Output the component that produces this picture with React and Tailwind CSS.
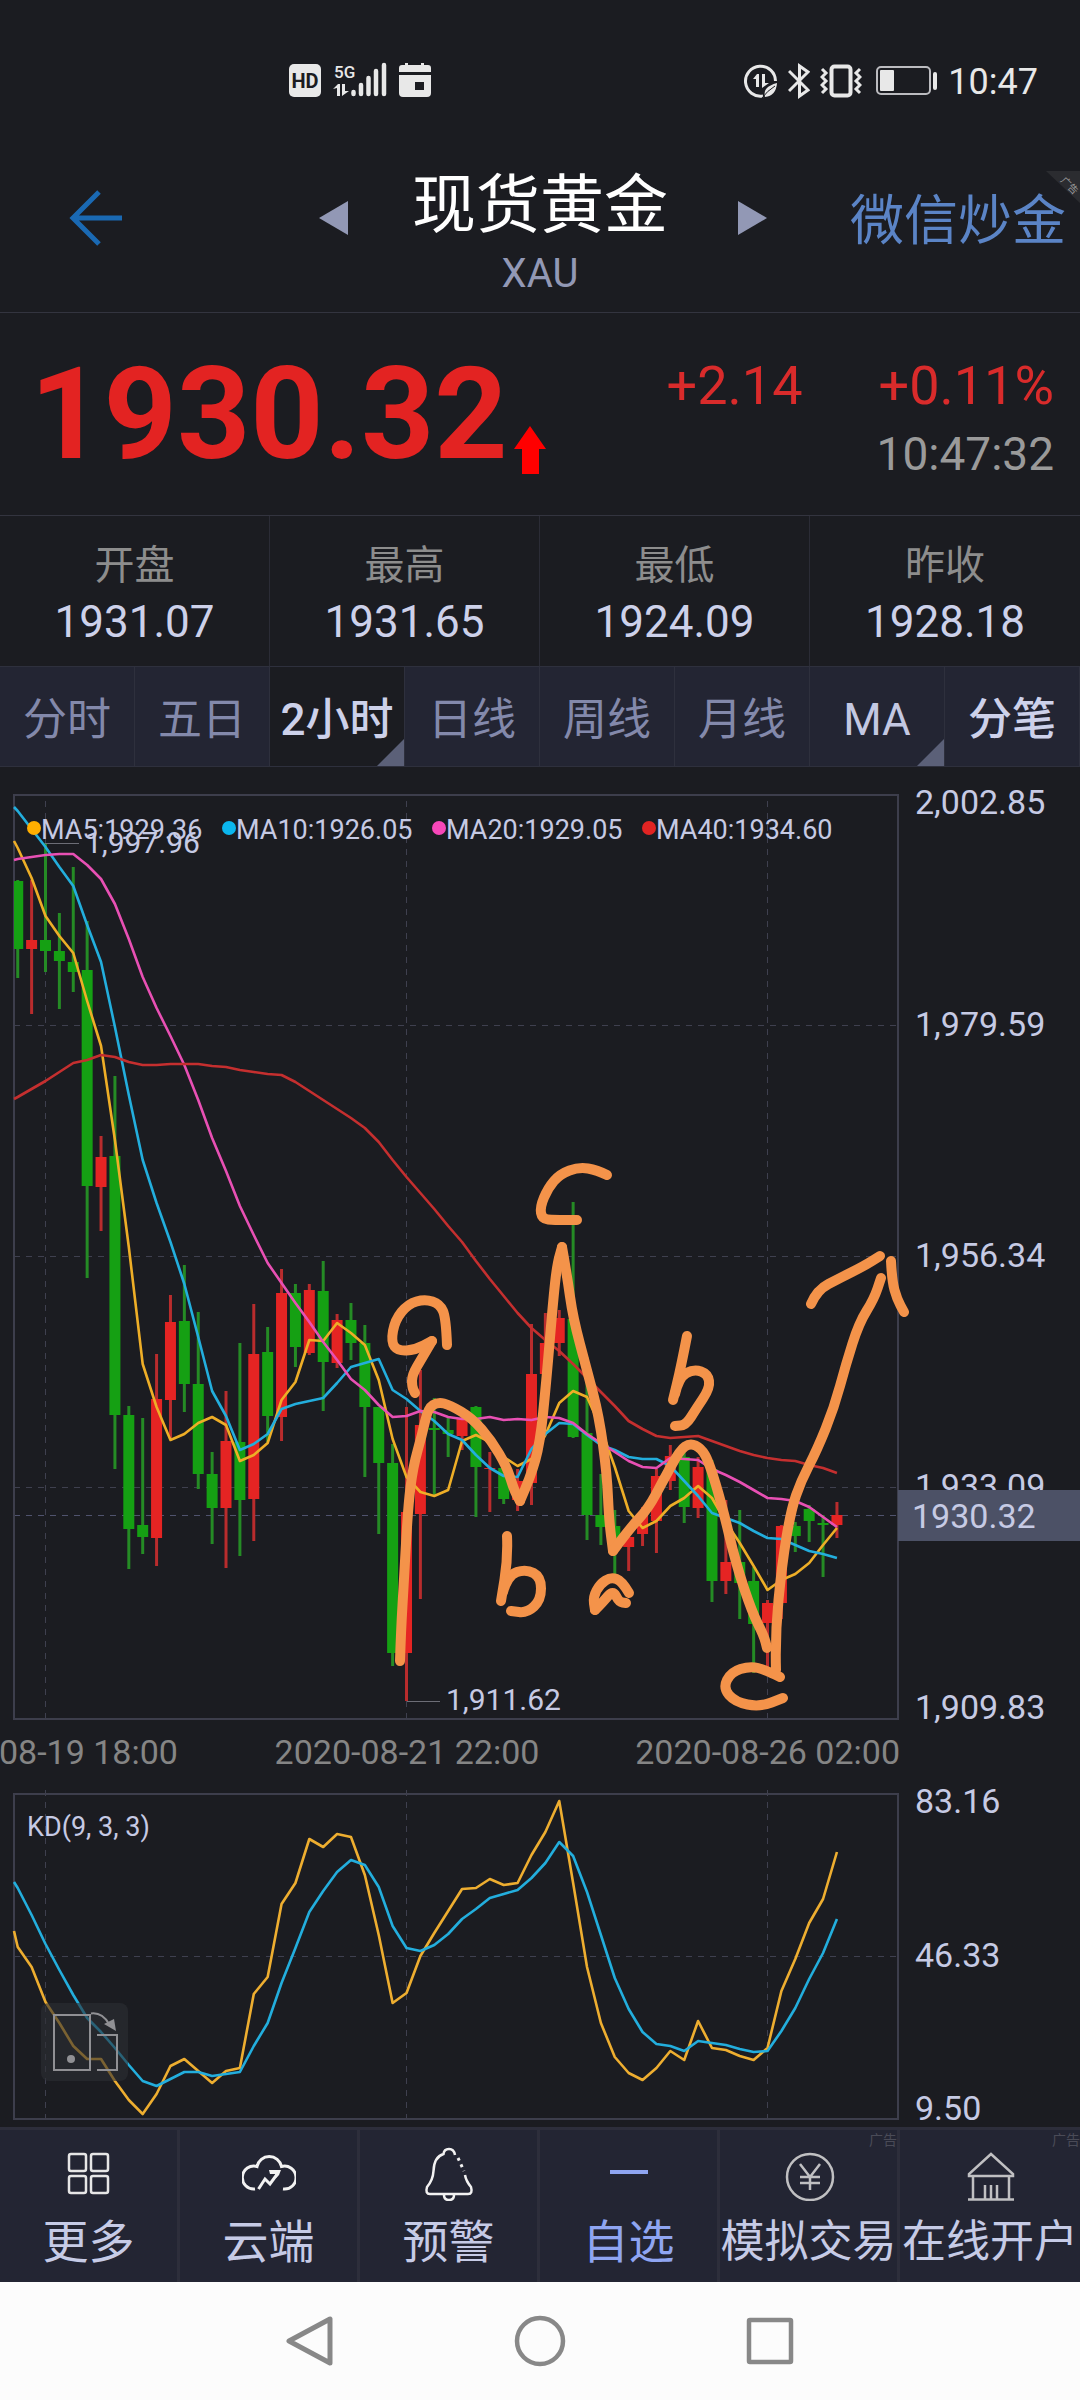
import React from "react";

const STEP = 13.885;
const candleX = (i) => 45.5 + (i - 2) * STEP;

/* [high, body top, body bottom, low, rising] in plot units, one row for each two-hour candle */
const CANDLES = [
  [880, 881, 949, 978, 0], [880, 940, 949, 1014, 1], [843, 940, 951, 972, 0], [913, 951, 961, 1009, 0],
  [867, 962, 972, 992, 0], [921, 970, 1186, 1278, 0], [1136, 1157, 1187, 1231, 1], [1076, 1156, 1415, 1469, 0],
  [1406, 1415, 1529, 1569, 0], [1418, 1525, 1537, 1554, 0], [1354, 1399, 1538, 1566, 1], [1295, 1322, 1400, 1440, 1],
  [1265, 1321, 1384, 1412, 0], [1312, 1384, 1474, 1489, 0], [1452, 1474, 1508, 1544, 0], [1391, 1441, 1508, 1568, 1],
  [1343, 1442, 1500, 1556, 0], [1304, 1354, 1499, 1541, 1], [1327, 1352, 1416, 1442, 0], [1269, 1293, 1417, 1441, 1],
  [1284, 1293, 1347, 1367, 0], [1284, 1290, 1353, 1355, 1], [1261, 1291, 1362, 1411, 0], [1314, 1320, 1363, 1368, 1],
  [1303, 1320, 1343, 1360, 0], [1325, 1343, 1407, 1477, 0], [1407, 1407, 1463, 1534, 0], [1444, 1463, 1653, 1666, 0],
  [1407, 1512, 1653, 1701, 1], [1370, 1425, 1514, 1599, 1], [1398, 1428, 1430, 1496, 0], [1417, 1430, 1434, 1457, 0],
  [1417, 1419, 1436, 1450, 1], [1406, 1407, 1467, 1517, 0], [1452, 1468, 1469, 1512, 1], [1460, 1468, 1499, 1504, 0],
  [1469, 1481, 1500, 1511, 1], [1324, 1374, 1483, 1505, 1], [1313, 1343, 1374, 1380, 1], [1310, 1318, 1343, 1356, 1],
  [1202, 1319, 1437, 1438, 0], [1357, 1433, 1515, 1540, 0], [1474, 1515, 1527, 1545, 0], [1510, 1526, 1541, 1576, 0],
  [1530, 1537, 1547, 1571, 1], [1507, 1515, 1534, 1546, 1], [1469, 1476, 1521, 1553, 1], [1445, 1456, 1481, 1490, 1],
  [1450, 1457, 1507, 1523, 0], [1457, 1467, 1508, 1518, 1], [1460, 1469, 1581, 1602, 0], [1500, 1562, 1581, 1594, 1],
  [1510, 1562, 1583, 1619, 0], [1567, 1581, 1624, 1673, 0], [1600, 1603, 1623, 1667, 1], [1525, 1526, 1603, 1619, 1],
  [1522, 1526, 1536, 1552, 0], [1505, 1509, 1521, 1542, 0], [1515, 1523, 1525, 1577, 0], [1502, 1515, 1525, 1538, 1],
];

const MA5 = [848, 878, 916, 936, 953, 1001, 1046, 1140, 1247, 1364, 1407, 1440, 1434, 1423, 1417, 1425, 1461, 1455, 1443, 1400, 1382, 1340, 1341, 1323, 1333, 1345, 1380, 1439, 1477, 1492, 1496, 1490, 1441, 1435, 1442, 1457, 1466, 1459, 1435, 1403, 1391, 1397, 1428, 1467, 1511, 1528, 1521, 1506, 1498, 1486, 1498, 1522, 1543, 1566, 1590, 1580, 1574, 1563, 1545, 1528];
const MA10 = [811, 829, 847, 867, 886, 925, 962, 1027, 1095, 1160, 1203, 1242, 1284, 1337, 1391, 1416, 1450, 1444, 1434, 1409, 1404, 1401, 1398, 1383, 1367, 1363, 1359, 1390, 1399, 1411, 1421, 1434, 1440, 1455, 1468, 1476, 1477, 1449, 1434, 1423, 1424, 1435, 1445, 1450, 1457, 1459, 1459, 1466, 1481, 1496, 1513, 1518, 1523, 1531, 1538, 1539, 1545, 1551, 1554, 1558];
const MA20 = [859, 857, 855, 854, 854, 865, 879, 904, 939, 977, 1008, 1036, 1065, 1100, 1138, 1171, 1206, 1235, 1263, 1283, 1303, 1322, 1342, 1360, 1379, 1390, 1405, 1417, 1416, 1411, 1412, 1417, 1419, 1419, 1417, 1420, 1419, 1420, 1417, 1418, 1423, 1434, 1443, 1452, 1461, 1467, 1468, 1458, 1459, 1460, 1469, 1475, 1482, 1490, 1498, 1499, 1501, 1507, 1517, 1527];
const MA40 = [1097, 1089, 1081, 1072, 1063, 1060, 1055, 1057, 1062, 1065, 1065, 1064, 1064, 1064, 1066, 1067, 1070, 1072, 1074, 1075, 1082, 1091, 1100, 1109, 1118, 1128, 1142, 1160, 1177, 1193, 1209, 1226, 1242, 1261, 1279, 1296, 1313, 1328, 1340, 1351, 1364, 1378, 1392, 1406, 1421, 1429, 1436, 1438, 1437, 1436, 1441, 1446, 1451, 1455, 1458, 1460, 1461, 1465, 1468, 1473];
const K_LINE = [1947, 1967, 2002, 2023, 2046, 2059, 2059, 2081, 2100, 2114, 2094, 2066, 2059, 2071, 2083, 2071, 2068, 1994, 1977, 1904, 1883, 1839, 1847, 1834, 1837, 1875, 1935, 2003, 1993, 1956, 1933, 1911, 1889, 1888, 1879, 1885, 1883, 1855, 1832, 1801, 1883, 1967, 2023, 2057, 2073, 2080, 2068, 2051, 2060, 2021, 2048, 2050, 2056, 2060, 2048, 1991, 1959, 1923, 1899, 1852];
const D_LINE = [1888, 1915, 1944, 1970, 1995, 2018, 2032, 2048, 2065, 2081, 2086, 2079, 2072, 2072, 2076, 2074, 2072, 2046, 2023, 1983, 1948, 1912, 1891, 1872, 1860, 1865, 1887, 1926, 1948, 1951, 1945, 1934, 1919, 1909, 1898, 1894, 1890, 1878, 1863, 1842, 1856, 1892, 1935, 1978, 2009, 2032, 2044, 2046, 2051, 2041, 2043, 2045, 2049, 2052, 2051, 2031, 2008, 1979, 1953, 1919];

const toPoints = (first, values) =>
  `14,${first} ` + values.map((v, i) => `${candleX(i)},${v}`).join(" ");

/* smooth freehand stroke through a list of points */
function strokePath(pts) {
  let d = `M${pts[0][0]} ${pts[0][1]}`;
  for (let i = 1; i < pts.length - 1; i++) {
    const mx = (pts[i][0] + pts[i + 1][0]) / 2;
    const my = (pts[i][1] + pts[i + 1][1]) / 2;
    d += ` Q${pts[i][0]} ${pts[i][1]} ${mx} ${my}`;
  }
  const e = pts[pts.length - 1];
  return d + ` L${e[0]} ${e[1]}`;
}

const PEN = [
  [[400, 1661], [401, 1630], [404, 1580], [408, 1507], [413, 1467], [422, 1435], [428, 1408], [438, 1402], [450, 1405], [472, 1418], [491, 1440], [507, 1467], [514, 1490], [520, 1501]],
  [[520, 1501], [531, 1476], [540, 1443], [546, 1385], [553, 1302], [557, 1265], [562, 1247]],
  [[562, 1247], [567, 1275], [573, 1318], [587, 1370], [599, 1416], [607, 1474], [609, 1520], [613, 1551]],
  [[613, 1551], [630, 1528], [648, 1509], [664, 1479], [680, 1450], [690, 1443], [701, 1448], [709, 1462], [722, 1505], [736, 1564], [752, 1612], [764, 1636], [767, 1648]],
  [[776, 1670], [775, 1636], [782, 1564], [791, 1510], [801, 1481], [817, 1450], [834, 1408], [846, 1364], [859, 1323], [874, 1299], [881, 1278]],
  [[811, 1304], [817, 1290], [840, 1278], [864, 1266], [880, 1256]],
  [[891, 1261], [892, 1281], [897, 1299], [904, 1312]],
  [[447, 1345], [446, 1318], [440, 1304], [425, 1299], [408, 1304], [395, 1320], [391, 1342], [398, 1351], [415, 1350], [432, 1341]],
  [[432, 1341], [422, 1358], [412, 1375], [412, 1387], [415, 1393]],
  [[607, 1175], [597, 1170], [579, 1167], [560, 1174], [548, 1188], [540, 1207], [542, 1219], [554, 1220], [577, 1220]],
  [[687, 1336], [681, 1367], [673, 1400]],
  [[675, 1394], [679, 1377], [694, 1369], [708, 1374], [710, 1388], [696, 1409], [686, 1425], [675, 1426]],
  [[507, 1536], [508, 1558], [501, 1601]],
  [[503, 1592], [508, 1575], [526, 1569], [541, 1577], [541, 1600], [527, 1613], [511, 1611]],
  [[629, 1593], [622, 1581], [611, 1577], [600, 1584], [593, 1597], [595, 1610]],
  [[595, 1610], [603, 1602], [613, 1590], [619, 1602], [626, 1603]],
  [[780, 1677], [766, 1670], [750, 1666], [731, 1672], [723, 1688], [735, 1702], [760, 1707], [783, 1698]],
];

const GRID_X = [45.5, 406.5, 767.5];

function PriceChart() {
  return (
    <svg viewBox="0 767 1080 1013" className="block h-auto w-full" role="img" aria-label="XAU 2小时 K线图" fontFamily="Roboto, 'Noto Sans CJK SC', sans-serif">
      <g stroke="#3f404f" strokeWidth="1" strokeDasharray="6 6">
        {[1025.5, 1256.5, 1487.5].map((y) => <line key={y} x1="14" x2="898" y1={y} y2={y} />)}
        {GRID_X.map((x) => <line key={x} x1={x} x2={x} y1="801" y2="1719" />)}
      </g>
      <line x1="14" x2="898" y1="1515.5" y2="1515.5" stroke="#50536e" strokeDasharray="6 6" />
      <rect x="14" y="795" width="884" height="924" fill="none" stroke="#3d3e4c" strokeWidth="2" />
      <g fill="#c6cae4" fontSize="34">
        <text x="915" y="814">2,002.85</text>
        <text x="915" y="1036">1,979.59</text>
        <text x="915" y="1267">1,956.34</text>
        <text x="915" y="1498">1,933.09</text>
        <text x="915" y="1719">1,909.83</text>
      </g>
      {CANDLES.map(([hi, top, bottom, lo, up], i) => {
        const x = candleX(i);
        const left = Math.max(x - 5.5, 14);
        return (
          <g key={i}>
            <line x1={x} x2={x} y1={hi} y2={lo} stroke={up ? "#b92c2d" : "#258b25"} strokeWidth="3" />
            <rect x={left} y={top} width={x + 5.5 - left} height={bottom - top} fill={up ? "#e52423" : "#15a013"} />
          </g>
        );
      })}
      <g fill="none" strokeWidth="2.6" strokeLinejoin="round">
        <polyline points={toPoints(841, MA5)} stroke="#eeae27" />
        <polyline points={toPoints(807, MA10)} stroke="#23aedd" />
        <polyline points={toPoints(860, MA20)} stroke="#e850b4" />
        <polyline points={toPoints(1099, MA40)} stroke="#c52f2f" />
      </g>
      <path d="M45 843.5H79M407 1701.5H440" stroke="#6c6d76" />
      <g fill="#c6cae4" fontSize="30">
        <text x="85" y="853">1,997.96</text>
        <text x="446" y="1710">1,911.62</text>
      </g>
      {[[34, "#ffae00", "MA5:1929.36"], [229, "#0bb6ee", "MA10:1926.05"], [439, "#f747b9", "MA20:1929.05"], [649, "#e12423", "MA40:1934.60"]].map(([x, color, label]) => (
        <g key={label}>
          <circle cx={x} cy="828" r="7" fill={color} />
          <text x={x + 7} y="839" fontSize="27" fill="#c6cae4">{label}</text>
        </g>
      ))}
      <g fill="none" stroke="#f4934a" strokeWidth="10" strokeLinecap="round" strokeLinejoin="round">
        {PEN.map((pts, i) => <path key={i} d={strokePath(pts)} />)}
      </g>
      <rect x="898" y="1490" width="182" height="51" fill="#4c5166" />
      <text x="912" y="1528" fontSize="34" fill="#c6cae4">1930.32</text>
      <g fill="#858585" fontSize="34">
        <text x="-1" y="1764">08-19 18:00</text>
        <text x="407" y="1764" textAnchor="middle">2020-08-21 22:00</text>
        <text x="900" y="1764" textAnchor="end">2020-08-26 02:00</text>
      </g>
    </svg>
  );
}

function KdChart() {
  return (
    <div className="relative">
      <svg viewBox="0 1780 1080 347" className="block h-auto w-full" role="img" aria-label="KD(9, 3, 3)" fontFamily="Roboto, sans-serif">
        <g stroke="#3f404f" strokeWidth="1" strokeDasharray="6 6">
          <line x1="14" x2="898" y1="1956.5" y2="1956.5" />
          {GRID_X.map((x) => <line key={x} x1={x} x2={x} y1="1790" y2="2119" />)}
        </g>
        <rect x="14" y="1794" width="884" height="325" fill="none" stroke="#3d3e4c" strokeWidth="2" />
        <text x="27" y="1836" fontSize="27" fill="#c6cae4">KD(9, 3, 3)</text>
        <g fill="none" strokeWidth="2.6" strokeLinejoin="round">
          <polyline points={toPoints(1931, K_LINE)} stroke="#eeae30" />
          <polyline points={toPoints(1882, D_LINE)} stroke="#23aedd" />
        </g>
        <g fill="#c6cae4" fontSize="34">
          <text x="915" y="1813">83.16</text>
          <text x="915" y="1967">46.33</text>
          <text x="915" y="2120">9.50</text>
        </g>
      </svg>
      <button type="button" aria-label="横屏" className="absolute bottom-[46px] left-[41px] rounded-lg bg-[#2d2e33]/60">
        <svg width="87" height="78" viewBox="0 0 87 78" fill="none" stroke="#909094" strokeWidth="2">
          <rect x="13" y="12" width="36" height="55" />
          <circle cx="30" cy="56" r="4" fill="#909094" stroke="none" />
          <path d="M50 10.500Q61 9 68 21M56 32H76V67H56" />
          <path d="M63 21L73 16L75 28Z" fill="#909094" stroke="none" />
        </svg>
      </button>
    </div>
  );
}

function StatusBar() {
  return (
    <div className="flex h-[110px] items-start justify-between pt-[62px] pr-[42px] pl-[288px] text-[#e8e8e8]">
      <div className="flex items-center gap-[11px]">
        <svg width="34" height="36" viewBox="0 0 34 36">
          <rect x="1" y="2" width="32" height="33" rx="5" fill="#e8e8e8" />
          <text x="17" y="26" fontSize="20" fontWeight="700" textAnchor="middle" fill="#1b1c21" fontFamily="Roboto, sans-serif">HD</text>
        </svg>
        <svg width="54" height="36" viewBox="0 0 54 36" fill="#e8e8e8">
          <text x="1" y="16" fontSize="17" fontWeight="500" fontFamily="Roboto, sans-serif">5G</text>
          <path d="M0 27L5 22H7V34H4V26ZM9 22H12V29H16L9 34Z" />
          <path d="M20.500 30V32M28 23V32M35.500 16V32M43 9V32M51 3V32" stroke="#e8e8e8" strokeWidth="4.500" strokeLinecap="round" />
        </svg>
        <svg width="34" height="36" viewBox="0 0 34 36" fill="#e8e8e8">
          <path d="M7 1H10V3H23V1H26V3H30Q33 3 33 6V10H1V6Q1 3 4 3H7Z" />
          <path fillRule="evenodd" d="M1 13H33V31Q33 35 29 35H5Q1 35 1 31ZM17 20V28H26V20Z" />
        </svg>
      </div>
      <div className="flex items-center gap-[10px]">
        <svg width="34" height="36" viewBox="0 0 34 36">
          <path d="M19 33A15 15 0 1 1 31.500 18" fill="none" stroke="#e8e8e8" strokeWidth="3" />
          <path d="M9 16L13 11H15V24H12V16ZM18 11H21V20H25L18 25Z" fill="#e8e8e8" />
          <path d="M33 20Q32 33 21 34Q18 24 33 20Z" fill="#e8e8e8" />
          <path d="M18 35Q23 28 31 23" stroke="#1b1c21" fill="none" />
        </svg>
        <svg width="22" height="36" viewBox="0 0 22 36" fill="none" stroke="#e8e8e8" strokeWidth="3">
          <path d="M1 8L20 27L11.500 33V3L20 9L1 28" />
        </svg>
        <svg width="42" height="36" viewBox="0 0 42 36" fill="none" stroke="#e8e8e8">
          <rect x="11.500" y="3.500" width="19" height="29" rx="3" strokeWidth="4" />
          <path d="M2 6L6 10L2 14L6 18L2 22L6 26L2 30M40 6L36 10L40 14L36 18L40 22L36 26L40 30" strokeWidth="3" />
        </svg>
        <svg width="62" height="36" viewBox="0 0 62 36" className="ml-1">
          <rect x="1" y="4" width="53" height="27" rx="4" fill="none" stroke="#bcbcc0" strokeWidth="2" />
          <rect x="4" y="7" width="14" height="21" rx="1" fill="#e8e8e8" />
          <rect x="57" y="9" width="4" height="18" rx="2" fill="#e8e8e8" />
        </svg>
        <span className="pt-0.5 text-4xl leading-9">10:47</span>
      </div>
    </div>
  );
}

function Header() {
  return (
    <header className="relative grid h-[203px] grid-cols-[1fr_auto_1fr] items-center border-b border-[#33343f] pt-[14px]">
      <button type="button" aria-label="返回" className="justify-self-start pl-[68px]">
        <svg width="56" height="58" viewBox="0 0 56 58" fill="none" stroke="#1a69b3" strokeWidth="5">
          <path d="M31 3L5 29L31 55M5 29H54" />
        </svg>
      </button>
      <div className="flex items-center gap-16">
        <button type="button" aria-label="上一个" className="pl-1.5">
          <svg width="29" height="34" viewBox="0 0 29 34"><path d="M29 0V34L0 17Z" fill="#9298b5" /></svg>
        </button>
        <div className="flex flex-col items-center gap-2 pt-8">
          <h1 className="text-[64px] leading-[72px] text-white">现货黄金</h1>
          <p className="text-[40px] leading-[48px] text-[#9298b5]">XAU</p>
        </div>
        <button type="button" aria-label="下一个" className="pl-1.5">
          <svg width="29" height="34" viewBox="0 0 29 34"><path d="M0 0V34L29 17Z" fill="#9298b5" /></svg>
        </button>
      </div>
      <a href="#wechat" className="justify-self-end pt-2 pr-[14px] text-[54px] leading-[60px] text-[#5b84c6]">微信炒金</a>
      <div className="absolute top-[61px] right-0 h-[32px] w-[34px]">
        <svg width="34" height="32" viewBox="0 0 34 32" fontFamily="'Noto Sans CJK SC', sans-serif">
          <path d="M0 0H34V32Z" fill="#2b2c30" />
          <text x="14" y="10" fontSize="10" fill="#9b9b9b" transform="rotate(45 14 10)">广告</text>
        </svg>
      </div>
    </header>
  );
}

const STATS = [["开盘", "1931.07"], ["最高", "1931.65"], ["最低", "1924.09"], ["昨收", "1928.18"]];

const TABS = [
  ["分时", "bg-[#232533] text-[#8389ab]"],
  ["五日", "bg-[#232533] text-[#8389ab]"],
  ["2小时", "bg-[#1b1c21] font-medium text-[#cdd1ea]", true],
  ["日线", "bg-[#232533] text-[#8389ab]"],
  ["周线", "bg-[#232533] text-[#8389ab]"],
  ["月线", "bg-[#232533] text-[#8389ab]"],
  ["MA", "bg-[#232533] text-[#c3c8e2]", true],
  ["分笔", "bg-[#232533] font-medium text-[#cdd1ea]"],
];

const GridIcon = () => (
  <svg width="54" height="54" viewBox="0 0 54 54" fill="none" stroke="#e6e6e6" strokeWidth="2.5">
    <rect x="7" y="7" width="17" height="17" rx="2" /><rect x="29" y="7" width="17" height="17" rx="2" />
    <rect x="7" y="29" width="17" height="17" rx="2" /><rect x="29" y="29" width="17" height="17" rx="2" />
  </svg>
);
const CloudIcon = () => (
  <svg width="54" height="54" viewBox="0 0 54 54" fill="none" stroke="#f2f2f2" strokeWidth="3">
    <path d="M13 42A11.500 11.500 0 1 1 15 19.500A12.500 12.500 0 0 1 39.500 19.500A11.500 11.500 0 1 1 41 42" />
    <path d="M16.500 42L23 32L28 37L36 26" />
    <path d="M27 23H39L37 28L34 31L33 27H28Z" fill="#f2f2f2" stroke="none" />
  </svg>
);
const BellIcon = () => (
  <svg width="54" height="54" viewBox="0 0 54 54" fill="none" stroke="#f2f2f2" strokeWidth="2.5">
    <path d="M33 8Q32 2 27 2Q22 2 21.500 7Q12 10 11.500 24Q11 33 5 40Q3 47 8 47H46Q51 47 49 40Q44 34 43 28" />
    <path d="M22 48Q22 53 27 53Q32 53 32 48" />
    <path d="M36 11L42 24" strokeDasharray="3 4" strokeWidth="3" />
  </svg>
);
const MinusIcon = () => (
  <svg width="54" height="54" viewBox="0 0 54 54"><rect x="8" y="23" width="38" height="4" fill="#8fa5f2" /></svg>
);
const YenIcon = () => (
  <svg width="54" height="54" viewBox="0 0 54 54" fill="none" stroke="#c0c0c2" strokeWidth="2.5">
    <circle cx="28" cy="30" r="23" />
    <path d="M18 17L28 30L38 17M28 30V43M18 30H38M18 36H38" />
  </svg>
);
const HouseIcon = () => (
  <svg width="54" height="54" viewBox="0 0 54 54" fill="none" stroke="#c0c0c2" strokeWidth="2.5">
    <path d="M28 7L6 27V29H50V27ZM10 29V52M46 29V52M22 52V38M28 52V38M34 52V38M5 52.500H51" />
  </svg>
);

const ACTIONS = [
  ["更多", GridIcon, "text-[46px] text-[#c6cbe6]"],
  ["云端", CloudIcon, "text-[46px] text-[#c6cbe6]"],
  ["预警", BellIcon, "text-[46px] text-[#c6cbe6]"],
  ["自选", MinusIcon, "text-[46px] text-[#8fa5f2]"],
  ["模拟交易", YenIcon, "text-[44px] text-[#c6cbe6]", true],
  ["在线开户", HouseIcon, "text-[44px] text-[#c6cbe6]", true],
];

export default function App() {
  return (
    <div className="min-h-screen w-full overflow-hidden bg-[#1b1c21] font-[Roboto,'Noto_Sans_CJK_SC',sans-serif]">
      <StatusBar />
      <Header />

      <section className="flex h-[203px] justify-between border-b border-[#33343f] pt-[37px] pr-[26px] pl-[30px]">
        <div className="flex items-start">
          <span className="text-[128px] leading-[128px] font-bold text-[#e32322]">1930.32</span>
          <svg width="32" height="48" viewBox="0 0 32 48" className="mt-[76px] ml-1.5" aria-label="上涨">
            <path d="M16 0L32 23H25V48H8V23H0Z" fill="#ff0000" />
          </svg>
        </div>
        <div className="flex flex-col items-end gap-2 pt-1">
          <p className="flex gap-[76px] text-[54px] leading-[64px] text-[#d92b2b]"><span>+2.14</span><span>+0.11%</span></p>
          <time className="text-[46px] leading-[56px] text-[#9a9a9a]">10:47:32</time>
        </div>
      </section>

      <dl className="grid h-[150px] grid-cols-4 divide-x divide-[#2b2c36]">
        {STATS.map(([name, value]) => (
          <div key={name} className="flex flex-col items-center gap-1.5 pt-[26px]">
            <dt className="text-[40px] leading-[48px] text-[#8d8d8d]">{name}</dt>
            <dd className="text-[44px] leading-[52px] text-[#cdd1ea]">{value}</dd>
          </div>
        ))}
      </dl>

      <nav className="grid h-[101px] grid-cols-8 border-y border-[#2e303d]">
        {TABS.map(([name, tone, menu]) => (
          <button key={name} type="button" className={`relative border-r border-[#2e303d] pt-1.5 text-[44px] leading-[52px] whitespace-nowrap ${tone}`}>
            {name}
            {menu && (
              <svg width="27" height="27" viewBox="0 0 27 27" className="absolute right-0 bottom-0"><path d="M27 0V27H0Z" fill="#5b6078" /></svg>
            )}
          </button>
        ))}
      </nav>

      <PriceChart />
      <KdChart />

      <nav className="grid grid-cols-6 border-t-3 border-[#2d2e3b] bg-[#232533]">
        {ACTIONS.map(([name, Icon, tone, ad]) => (
          <button key={name} type="button" className="relative flex h-[152px] flex-col items-center gap-[11px] border-r-3 border-[#2d2e3b] pt-[17px] last:border-r-0">
            <Icon />
            <span className={`leading-[60px] whitespace-nowrap ${tone}`}>{name}</span>
            {ad && <span className="absolute top-0 right-0 text-sm leading-5 text-[#4a4b57]">广告</span>}
          </button>
        ))}
      </nav>

      <nav className="flex h-[118px] items-center justify-center gap-[178px] bg-[#fcfcfc]">
        <button type="button" aria-label="返回">
          <svg width="52" height="52" viewBox="0 0 52 52" fill="none" stroke="#888" strokeWidth="5" strokeLinejoin="round"><path d="M46 4V48L5 26Z" /></svg>
        </button>
        <button type="button" aria-label="主页">
          <svg width="52" height="52" viewBox="0 0 52 52" fill="none" stroke="#888" strokeWidth="4.500"><circle cx="26" cy="26" r="23" /></svg>
        </button>
        <button type="button" aria-label="最近任务">
          <svg width="52" height="52" viewBox="0 0 52 52" fill="none" stroke="#888" strokeWidth="4.500"><rect x="5" y="5" width="42" height="42" rx="1" /></svg>
        </button>
      </nav>
    </div>
  );
}
